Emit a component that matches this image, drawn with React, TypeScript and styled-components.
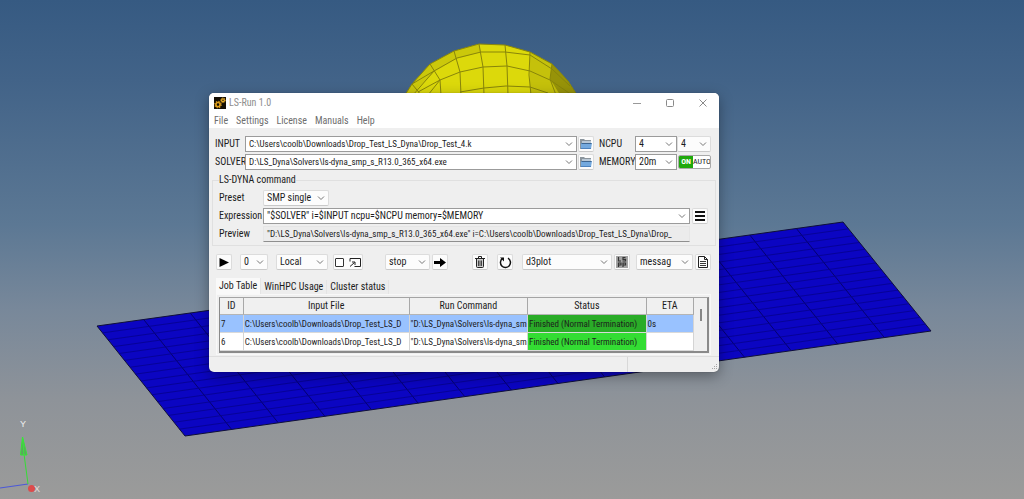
import React from "react";
import styled, { createGlobalStyle, css } from "styled-components";

const GlobalStyle = createGlobalStyle`
  * { box-sizing: border-box; }
  body { margin: 0; }
  body, input, select, button, table {
    font-family: "Roboto Condensed", "Noto Sans", sans-serif;
    font-size: 10px;
    line-height: 14px;
    color: #1c1c1c;
  }
`;

const Desktop = styled.main`
  position: relative;
  width: 100%;
  min-height: 100vh;
  overflow: hidden;
  background: linear-gradient(#365a82 0%, #426388 16%, #5c7894 45%, #78889a 62%, #8e9399 80%, #9b9b9a 100%);
`;

const Scene = styled.svg`
  position: absolute;
  inset: 0;
  width: 100%;
  height: 100%;
`;

const AppWindow = styled.section`
  position: absolute;
  left: 209px;
  top: 93px;
  width: calc(50% - 2px);
  min-width: 500px;
  border-radius: 5px;
  overflow: hidden;
  background: #efefef;
  box-shadow: 0 0 1px rgba(0, 0, 0, 0.4), 0 4px 14px rgba(0, 0, 0, 0.35);
`;

const TitleBar = styled.header`
  display: flex;
  align-items: center;
  height: 20px;
  padding: 0 7px 0 5px;
  background: #fff;
`;

const Title = styled.h1`
  flex: 1;
  margin: 0 0 0 3px;
  font-size: 10px;
  font-weight: 400;
  color: #8d8d8d;
`;

const CaptionButton = styled.button`
  display: flex;
  align-items: center;
  justify-content: center;
  width: 18px;
  height: 18px;
  margin-left: 15px;
  padding: 0;
  border: 0;
  background: none;
`;

const MenuBar = styled.nav`
  display: flex;
  gap: 8px;
  height: 15px;
  padding: 0 5px;
  background: #fff;
`;

const MenuItem = styled.button`
  padding: 0;
  border: 0;
  background: none;
  line-height: 16px;
  color: #6e6e6e;
`;

const Body = styled.div`
  padding: 8px 8px 1px 7px;
`;

const PathGrid = styled.div`
  display: grid;
  grid-template-columns: 30px 1fr 22px 36px 42px 34px;
  grid-auto-rows: 16px;
  row-gap: 2px;
  align-items: center;
  margin-left: -1px;

  & > button {
    margin-left: 1px;
  }
`;

const Label = styled.label`
  white-space: nowrap;
`;

const framed = css`
  border: 1px solid #dcdcdc;
  border-bottom-color: #c9c9c9;
  border-radius: 2px;
  background: #fcfcfc;
`;

const Field = styled.div<{ $width?: number; $boxed?: boolean; $small?: boolean }>`
  display: grid;
  grid-template-columns: 1fr 11px;
  align-items: center;
  width: ${(p) => (p.$width ? `${p.$width}px` : "auto")};
  height: 16px;
  ${framed}
  ${(p) =>
    p.$boxed &&
    css`
      border: 1px solid #9b9b9b;
      border-radius: 0;
      background: #fff;
    `}

  & > input,
  & > select {
    grid-area: 1 / 1 / 2 / 3;
    width: 100%;
    min-width: 0;
    height: 14px;
    padding: 0 11px 0 3px;
    border: 0;
    outline: 0;
    background: none;
    appearance: none;
    font-size: ${(p) => (p.$small ? 9 : 10)}px;
  }

  & > svg {
    grid-area: 1 / 2;
    pointer-events: none;
  }
`;

const ToolButton = styled.button`
  display: flex;
  align-items: center;
  justify-content: center;
  width: 16px;
  height: 16px;
  padding: 0;
  ${framed}
`;

const Toggle = styled.button`
  display: grid;
  grid-template-columns: 14px 1fr;
  height: 14px;
  padding: 0;
  border: 1px solid #a9a9a9;
  border-radius: 2px;
  overflow: hidden;
  background: #fff;
  font-size: 8px;
  line-height: 12px;
  text-align: center;
`;

const ToggleOn = styled.span`
  background: #1fa80c;
  color: #fff;
  font-weight: 700;
`;

const Command = styled.fieldset`
  display: grid;
  grid-template-columns: 44px 1fr 18px;
  grid-auto-rows: 16px;
  row-gap: 2px;
  align-items: center;
  margin: 3px -5px 0 -4px;
  padding: 3px 7px 3px 6px;
  border: 1px solid #e0e0e0;
  min-width: 0;

  & > button {
    margin-left: 2px;
  }
`;

const Legend = styled.legend`
  padding: 0;
`;

const Preview = styled.output`
  grid-column: 2;
  height: 16px;
  padding: 0 3px;
  overflow: hidden;
  white-space: nowrap;
  background: #ececec;
  border: 1px solid #e6e6e6;
  border-bottom-color: #8f8f8f;
  font-size: 9px;
`;

const ToolRow = styled.div`
  display: flex;
  align-items: center;
  gap: 1px;
  margin-top: 8px;
`;

const Group = styled.div<{ $left: number }>`
  display: flex;
  gap: 2px;
  margin-left: ${(p) => p.$left}px;
`;

const Spring = styled.span`
  flex: 1;
`;

const EchoBox = styled.div`
  display: flex;
  align-items: center;
  gap: 5px;
  height: 16px;
  padding: 0 1px;
  ${framed}
`;

const Tick = styled.input`
  appearance: none;
  width: 9px;
  height: 9px;
  margin: 0;
  border: 1px solid #333;
  border-radius: 1px;
  background: #fff;
`;

const Tabs = styled.div`
  display: flex;
  align-items: flex-end;
  margin-top: 8px;
`;

const Tab = styled.button<{ $active?: boolean }>`
  height: ${(p) => (p.$active ? 16 : 14)}px;
  padding: 0 3px;
  border: 0;
  white-space: nowrap;
  background: ${(p) => (p.$active ? "#f9f9f9" : "#ededed")};
  border-right: 1px solid #e4e4e4;
`;

const TabPanel = styled.div`
  padding: 2px 1px 1px 2px;
  border: 1px solid #f8f8f8;
`;

const TableFrame = styled.div`
  display: flex;
  border: 1px solid #8a8a8a;
  border-top-color: #a4a4a4;
  border-width: 1px 2px 2px 1px;
  background: #efefef;
`;

const JobTable = styled.table`
  flex: 1;
  width: 0;
  table-layout: fixed;
  border-collapse: separate;
  border-spacing: 0;
`;

const Th = styled.th<{ $width?: string }>`
  width: ${(p) => p.$width ?? "auto"};
  height: 17px;
  padding: 0;
  border-right: 1px solid #a8a8a8;
  border-bottom: 1px solid #b5b5b5;
  background: #f0f0f0;
  font-weight: 400;
`;

const Row = styled.tr<{ $selected?: boolean }>`
  background: ${(p) => (p.$selected ? "#99c2ff" : "#fff")};
`;

const Td = styled.td<{ $fill?: string }>`
  height: 18px;
  padding: 0 0 0 1px;
  overflow: hidden;
  white-space: nowrap;
  border-right: 1px solid #d4d4d4;
  border-bottom: 1px solid #d9d9d9;
  background: ${(p) => p.$fill ?? "transparent"};
  font-size: 9px;
`;

const ScrollTrack = styled.div`
  display: flex;
  justify-content: center;
  width: 13px;
  padding-top: 11px;
`;

const ScrollThumb = styled.div`
  width: 2px;
  height: 12px;
  background: #868686;
`;

const StatusBar = styled.footer`
  display: flex;
  justify-content: flex-end;
  align-items: stretch;
  height: 16px;
  border-top: 1px solid #dedede;
`;

const StatusCell = styled.div`
  display: flex;
  align-items: flex-end;
  justify-content: flex-end;
  width: 92px;
  padding: 0 1px 1px 0;
  border-left: 1px solid #d8d8d8;
`;

const Chevron = () => (
  <svg width="8" height="6" viewBox="0 0 8 6" fill="none" stroke="#777" strokeWidth="1">
    <path d="M1 1.500 4 4.500 7 1.500" />
  </svg>
);

const Combo = ({ id, value, small }: { id: string; value: string; small?: boolean }) => (
  <Field $boxed $small={small}>
    <input id={id} type="text" defaultValue={value} />
    <Chevron />
  </Field>
);

const Pick = ({ value, label, width, id }: { value: string; label: string; width?: number; id?: string }) => (
  <Field $width={width}>
    <select id={id} aria-label={label} defaultValue={value}>
      <option>{value}</option>
    </select>
    <Chevron />
  </Field>
);

const FolderIcon = () => (
  <svg width="12" height="12" viewBox="0 0 12 12">
    <path d="M0 1h4l1 1h6v9H0z" fill="#8b959d" />
    <path d="M2 3h9v4H2z" fill="#b9c8d6" />
    <path d="M1 5h11l-1 6H1z" fill="#74a9de" />
    <path d="M1.500 5.500h10" stroke="#3f6690" />
    <path d="M1 10.500h10" stroke="#4d82bd" />
  </svg>
);

const GearIcon = () => (
  <svg width="12" height="12" viewBox="0 0 12 12">
    <path d="M0 0h12v12H0z" fill="#130d04" />
    <circle cx="4" cy="7.600" r="2.100" fill="none" stroke="#e0a01c" strokeWidth="1.600" />
    <circle cx="4" cy="7.600" r="3.200" fill="none" stroke="#e0a01c" strokeWidth="1.100" strokeDasharray="1.300 1.210" />
    <circle cx="9" cy="3.300" r="1.400" fill="none" stroke="#e6ab28" strokeWidth="1.300" />
    <circle cx="9" cy="3.300" r="2.300" fill="none" stroke="#e6ab28" strokeWidth="1" strokeDasharray="1 0.810" />
  </svg>
);

const COLS = 16;
const ROWS = 16;

const Plate = () => {
  const across = Array.from({ length: COLS - 1 }, (_, i) => (i + 1) / COLS);
  const down = Array.from({ length: ROWS - 1 }, (_, i) => (i + 1) / ROWS);
  return (
    <g>
      <path d="M97 326 843 222 931 331 185 436z" fill="#0b05c2" stroke="#101038" strokeWidth="1" />
      <g stroke="#05026e" strokeWidth="1">
        {across.map((t) => (
          <line key={t} x1={97 + 746 * t} y1={326 - 104 * t} x2={185 + 746 * t} y2={436 - 105 * t} />
        ))}
      </g>
      <g stroke="#06038c" strokeWidth="0.800">
        {down.map((t) => (
          <line key={t} x1={97 + 88 * t} y1={326 + 110 * t} x2={843 + 88 * t} y2={222 + 109 * t} />
        ))}
      </g>
    </g>
  );
};

const Ball = () => (
  <g strokeLinejoin="round">
    <path
      d="M405 95 412 84 430 64 454 51 479 44 505 45 530 52 552 64 568 81 577 95 570 140 490 170 410 140z"
      fill="#dcd90b"
    />
    <path d="M530 52 552 64 550 79 560 95H530z" fill="#c5c10b" />
    <path d="M552 64 568 81 577 95H560L550 79z" fill="#979309" />
    <path d="M405 95 412 84 430 64 454 51 479 44 481 52 456 59 434 72 418 88 413 95z" fill="#cbc80b" />
    <path
      d="M405 95 412 84 430 64 454 51 479 44 505 45 530 52 552 64 568 81 577 95M412 84 434 71 457 58 481 52 505 52 530 55 552 69 570 86M418 92 440 80 460 72 483 67 507 66 530 71 550 80 572 95M460 92 484 88 506 86 530 87 548 93M454 51 460 72 461 95M479 44 483 67 484 95M505 45 507 66 508 95M530 52 529 75 531 95M552 64 550 79 556 95M430 64 440 80 441 95M412 84 421 95M434 71 413 95M440 80 428 95"
      fill="none"
      stroke="#88850a"
      strokeWidth="1"
    />
  </g>
);

const Axes = () => (
  <g>
    <path d="M0 488 28 484" stroke="#4b58d8" strokeWidth="1.200" />
    <path d="M24 454 28 484" stroke="#35dd35" strokeWidth="1" />
    <path d="M22.500 437 20.500 455H27z" fill="#5f9f63" stroke="#35e435" strokeWidth="1" />
    <path d="M22.500 437 24 455" stroke="#35f035" />
    <circle cx="31.500" cy="488.500" r="3.500" fill="#dc4b4b" />
    <text x="20" y="427" fill="#eee" fontSize="9" fontFamily="Liberation Sans, sans-serif">Y</text>
    <text x="34" y="492" fill="#e8dada" fontSize="9" fontFamily="Liberation Sans, sans-serif">X</text>
  </g>
);

const menus = ["File", "Settings", "License", "Manuals", "Help"];

const jobs = [
  { id: "7", eta: "0s", fill: "#2aac28", selected: true },
  { id: "6", eta: "", fill: "#33dd33", selected: false },
];

export default function App() {
  return (
    <Desktop>
      <GlobalStyle />
      <Scene viewBox="0 0 1024 499" preserveAspectRatio="xMinYMin slice" aria-hidden="true">
        <Plate />
        <Ball />
        <Axes />
      </Scene>
      <AppWindow>
        <TitleBar>
          <GearIcon />
          <Title>LS-Run 1.0</Title>
          <CaptionButton aria-label="Minimize">
            <svg width="8" height="8" viewBox="0 0 8 8" stroke="#999"><path d="M0 4.500h8" /></svg>
          </CaptionButton>
          <CaptionButton aria-label="Maximize">
            <svg width="8" height="8" viewBox="0 0 8 8" fill="none" stroke="#8a8a8a"><rect x="0.500" y="0.500" width="7" height="7" rx="1" /></svg>
          </CaptionButton>
          <CaptionButton aria-label="Close">
            <svg width="8" height="8" viewBox="0 0 8 8" stroke="#8a8a8a"><path d="m.5.5 7 7m0-7-7 7" /></svg>
          </CaptionButton>
        </TitleBar>
        <MenuBar>
          {menus.map((m) => (
            <MenuItem key={m}>{m}</MenuItem>
          ))}
        </MenuBar>
        <Body>
          <PathGrid>
            <Label htmlFor="input">INPUT</Label>
            <Combo small id="input" value="C:\Users\coolb\Downloads\Drop_Test_LS_Dyna\Drop_Test_4.k" />
            <ToolButton aria-label="Browse input"><FolderIcon /></ToolButton>
            <Label htmlFor="ncpu">NCPU</Label>
            <Combo id="ncpu" value="4" />
            <Pick label="Cores" value="4" />
            <Label htmlFor="solver">SOLVER</Label>
            <Combo small id="solver" value="D:\LS_Dyna\Solvers\ls-dyna_smp_s_R13.0_365_x64.exe" />
            <ToolButton aria-label="Browse solver"><FolderIcon /></ToolButton>
            <Label htmlFor="memory">MEMORY</Label>
            <Combo id="memory" value="20m" />
            <Toggle aria-pressed="true">
              <ToggleOn>ON</ToggleOn>
              <span>AUTO</span>
            </Toggle>
          </PathGrid>
          <Command>
            <Legend>LS-DYNA command</Legend>
            <Label htmlFor="preset">Preset</Label>
            <Pick id="preset" label="Preset" value="SMP single" width={66} />
            <span />
            <Label htmlFor="expression">Expression</Label>
            <Combo id="expression" value={'"$SOLVER" i=$INPUT ncpu=$NCPU memory=$MEMORY'} />
            <ToolButton aria-label="Variables">
              <svg width="10" height="10" viewBox="0 0 10 10" stroke="#111" strokeWidth="2"><path d="M0 1h10M0 5h10M0 9h10" /></svg>
            </ToolButton>
            <span>Preview</span>
            <Preview>{'"D:\\LS_Dyna\\Solvers\\ls-dyna_smp_s_R13.0_365_x64.exe" i=C:\\Users\\coolb\\Downloads\\Drop_Test_LS_Dyna\\Drop_'}</Preview>
          </Command>
          <ToolRow>
            <ToolButton aria-label="Run">
              <svg width="10" height="9" viewBox="0 0 10 9"><path d="M0.500 0 10 4.500 0.500 9z" fill="#000" /></svg>
            </ToolButton>
            <Group $left={7}><Pick label="Queue position" value="0" width={28} /></Group>
            <Group $left={7}><Pick label="Host" value="Local" width={52} /></Group>
            <Group $left={4}>
              <EchoBox>
                <Tick type="checkbox" aria-label="Show console" />
                <svg width="12" height="9" viewBox="0 0 12 9" fill="none" stroke="#222">
                  <path d="M1 3.500V.5h10.500v8H5.500M1 8.500l4.500-4M3 4h3v3" />
                </svg>
              </EchoBox>
            </Group>
            <Group $left={21}>
              <Pick label="Action" value="stop" width={45} />
              <ToolButton aria-label="Send">
                <svg width="12" height="9" viewBox="0 0 12 9"><path d="M0 3h6V0l6 4.500L6 9V6H0z" fill="#000" /></svg>
              </ToolButton>
            </Group>
            <Spring />
            <ToolButton aria-label="Delete">
              <svg width="10" height="12" viewBox="0 0 10 12" fill="none" stroke="#222">
                <path d="M0 2.500h10M3.500 2V.5h3V2" />
                <path d="M1.500 3v7.500q0 1 1 1h5q1 0 1-1V3" fill="#ccc" />
                <path d="M3.500 4.500v5.500M5 4.500v5.500M6.500 4.500v5.500" strokeWidth="0.800" />
              </svg>
            </ToolButton>
            <Group $left={8}>
              <ToolButton aria-label="Refresh">
                <svg width="13" height="13" viewBox="0 0 13 13" fill="none" stroke="#111" strokeWidth="1.500">
                  <path d="M9 2.200A5 5 0 1 1 3.600 2.400" />
                  <path d="M1 1.500h4v4z" fill="#111" stroke="none" />
                </svg>
              </ToolButton>
            </Group>
            <Group $left={8}>
              <Pick label="Plot" value="d3plot" width={90} />
              <ToolButton aria-label="Open in LS-PrePost">
                <svg width="12" height="12" viewBox="0 0 12 12">
                  <path d="M0 0h12v12H0z" fill="#a3a3a3" />
                  <path d="M2.500 1v4H5M9.500 1.500H7v1.800h2.500V5H6.500M2.500 11V7H5v2H2.500M7 11V7h2.500v2H7" fill="none" stroke="#333" strokeWidth="1.200" />
                </svg>
              </ToolButton>
            </Group>
            <Group $left={5}>
              <Pick label="Message file" value="messag" width={57} />
              <ToolButton aria-label="View file">
                <svg width="10" height="12" viewBox="0 0 10 12" fill="none" stroke="#222">
                  <path d="M.5.5h6l3 3v8h-9zM6.500.5v3h3" />
                  <path d="M2 5.500h6M2 7.500h6M2 9.500h6" strokeWidth="0.900" />
                </svg>
              </ToolButton>
            </Group>
          </ToolRow>
          <Tabs role="tablist">
            <Tab role="tab" aria-selected="true" $active>Job Table</Tab>
            <Tab role="tab">WinHPC Usage</Tab>
            <Tab role="tab">Cluster status</Tab>
          </Tabs>
          <TabPanel role="tabpanel">
            <TableFrame>
              <JobTable>
                <thead>
                  <tr>
                    <Th $width="5%">ID</Th>
                    <Th $width="35%">Input File</Th>
                    <Th $width="25%">Run Command</Th>
                    <Th $width="25%">Status</Th>
                    <Th>ETA</Th>
                  </tr>
                </thead>
                <tbody>
                  {jobs.map((j) => (
                    <Row key={j.id} $selected={j.selected}>
                      <Td>{j.id}</Td>
                      <Td>{"C:\\Users\\coolb\\Downloads\\Drop_Test_LS_D"}</Td>
                      <Td>{'"D:\\LS_Dyna\\Solvers\\ls-dyna_sm'}</Td>
                      <Td $fill={j.fill}>Finished (Normal Termination)</Td>
                      <Td>{j.eta}</Td>
                    </Row>
                  ))}
                </tbody>
              </JobTable>
              <ScrollTrack><ScrollThumb /></ScrollTrack>
            </TableFrame>
          </TabPanel>
        </Body>
        <StatusBar>
          <StatusCell>
            <svg width="7" height="7" viewBox="0 0 7 7" fill="#a5a5a5">
              <path d="M5 0h1v1H5zM3 2h1v1H3zM5 2h1v1H5zM1 4h1v1H1zM3 4h1v1H3zM5 4h1v1H5z" />
            </svg>
          </StatusCell>
        </StatusBar>
      </AppWindow>
    </Desktop>
  );
}
